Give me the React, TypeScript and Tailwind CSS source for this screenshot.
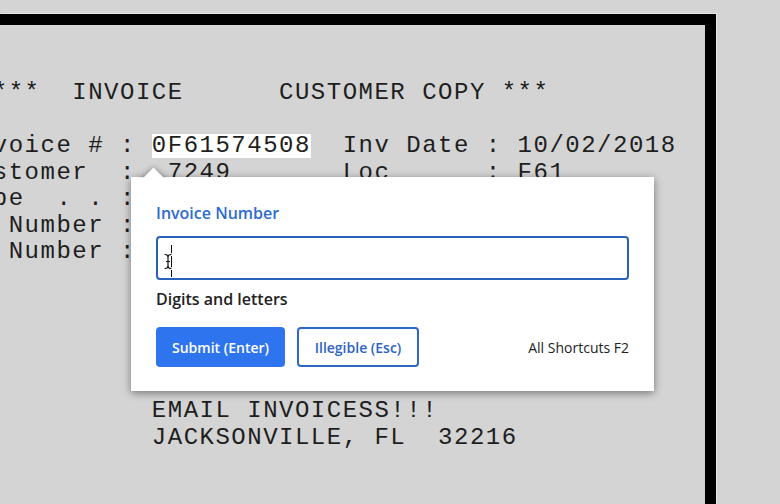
import React from "react";

const mono = { fontFamily: '"Liberation Mono", "DejaVu Sans Mono", monospace' };
const sans = { fontFamily: '"Open Sans", "Noto Sans", sans-serif' };

function IBeam() {
  return (
    <svg
      width="16"
      height="38"
      viewBox="0 0 16 38"
      className="absolute left-[4px] top-[4px]"
      fill="none"
    >
      {/* text caret */}
      <line x1="9.5" y1="3" x2="9.5" y2="35" stroke="#111" strokeWidth="1" />
      {/* mouse I-beam */}
      <g stroke="#fff" strokeWidth="3" strokeLinecap="round">
        <path d="M3 12.5 Q6 12.5 6 15 Q6 12.5 9 12.5" />
        <path d="M3 26.5 Q6 26.5 6 24 Q6 26.5 9 26.5" />
        <path d="M6 15 V24" />
      </g>
      <g stroke="#111" strokeWidth="1.2" strokeLinecap="round">
        <path d="M3 12.5 Q6 12.5 6 15 Q6 12.5 9 12.5" />
        <path d="M3 26.5 Q6 26.5 6 24 Q6 26.5 9 26.5" />
        <path d="M6 15 V24" />
        <path d="M4.5 19.5 H7.5" />
      </g>
    </svg>
  );
}

function Popup() {
  return (
    <div
      className="absolute left-[131px] top-[177px] w-[523px] h-[214px] bg-white shadow-[0_2px_8px_rgba(0,0,0,0.45)] px-[25px] pt-[24px] pb-[24px] flex flex-col"
      style={sans}
    >
      {/* arrow */}
      <div className="absolute left-[6px] top-[-14px] w-[32px] h-[15px] overflow-hidden">
        <div className="absolute left-[7.5px] top-[7.5px] w-[17px] h-[17px] bg-white rotate-45 shadow-[0_0_6px_rgba(0,0,0,0.4)]" />
      </div>
      <div className="text-[16px] leading-[24px] font-semibold text-[#2e6bd0]">
        Invoice Number
      </div>
      <div className="relative mt-[11px] h-[44px] border-2 border-[#2a62b8] rounded-[4px] bg-white">
        <IBeam />
      </div>
      <div className="mt-[7px] text-[16px] leading-[24px] font-semibold text-[#222]">
        Digits and letters
      </div>
      <div className="mt-[16px] flex items-center">
        <div className="w-[129px] h-[40px] rounded-[4px] bg-[#2f74ef] text-white text-[14px] font-semibold flex items-center justify-center">
          Submit (Enter)
        </div>
        <div className="ml-[12px] w-[122px] h-[40px] rounded-[4px] border-2 border-[#2d67c9] text-[#2d64c4] text-[14px] font-semibold flex items-center justify-center">
          Illegible (Esc)
        </div>
        <div className="ml-auto text-[14px] text-[#222]">All Shortcuts F2</div>
      </div>
    </div>
  );
}

export default function App() {
  const lines: React.ReactNode[] = [
    "  ***  INVOICE      CUSTOMER COPY ***",
    " ",
    <>
      {"Invoice # : "}
      <span className="inline-block h-[24px] leading-[24px] bg-white">0F61574508</span>
      {"  Inv Date : 10/02/2018"}
    </>,
    "Customer  :  7249       Loc      : F61",
    "Type  . . :",
    "PO Number :                                :",
    "BL Number :",
    " ",
    " ",
    " ",
    " ",
    " ",
    "            EMAIL INVOICESS!!!",
    "            JACKSONVILLE, FL  32216",
  ];
  return (
    <div className="relative w-[780px] h-[504px] overflow-hidden bg-[#d4d4d4]">
      <div className="mt-[14px] w-[716px] h-[490px] border-t-[11px] border-r-[11px] border-black shadow-[1px_-1px_0_#e6e6e6] pt-[55px]">
        <div
          className="ml-[-39px] text-[24px] leading-[26.5px] tracking-[1.5px] text-[#1e1e1e] whitespace-pre"
          style={mono}
        >
          {lines.map((l, i) => (
            <div key={i} className="h-[26.5px]">
              {l}
            </div>
          ))}
        </div>
      </div>
      <Popup />
    </div>
  );
}
